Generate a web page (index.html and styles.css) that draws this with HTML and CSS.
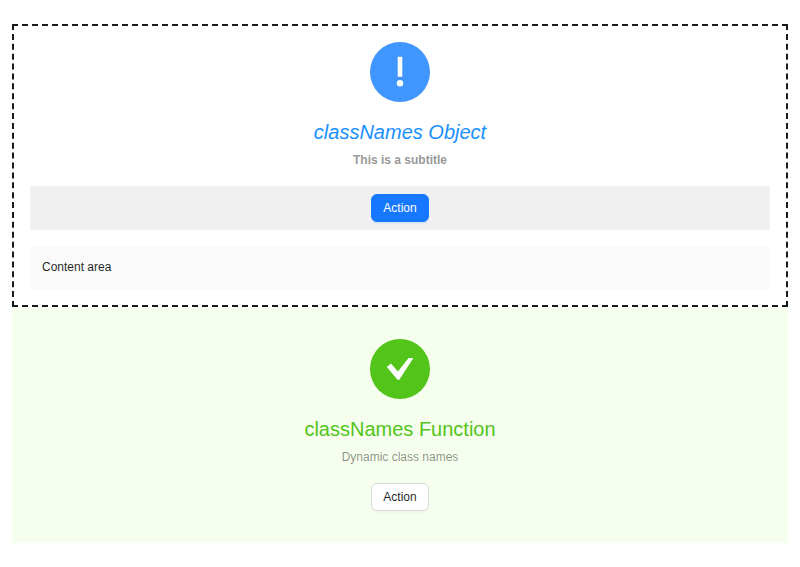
FILE: index.html
```html
<!DOCTYPE html>
<html lang="en">
<head>
<meta charset="utf-8">
<title>Result</title>
<link rel="stylesheet" href="styles.css">
</head>
<body>
<main class="page">
  <section class="result result-object">
    <div class="icon icon-info">
      <svg width="60" height="60" viewBox="0 0 60 60"><rect x="27.7" y="14.7" width="4.6" height="20" rx="0.6" fill="#fff"/><circle cx="30" cy="41.3" r="3.2" fill="#fff"/></svg>
    </div>
    <h2 class="title title-object">classNames Object</h2>
    <p class="subtitle subtitle-object">This is a subtitle</p>
    <div class="extra extra-object"><button class="btn btn-primary">Action</button></div>
    <div class="content">Content area</div>
  </section>
  <section class="result result-function">
    <div class="icon icon-success">
      <svg width="60" height="60" viewBox="0 0 60 60"><path d="M16.8 27.9 L20.9 24.6 L28 32.6 L38.6 19 L43.4 19 L29.6 40.2 Q28.4 41.6 27.1 40.2 Z" fill="#fff"/></svg>
    </div>
    <h2 class="title title-function">classNames Function</h2>
    <p class="subtitle subtitle-function">Dynamic class names</p>
    <div class="extra extra-function"><button class="btn btn-default">Action</button></div>
  </section>
</main>
</body>
</html>
```
FILE: styles.css
```css
* { box-sizing: border-box; }
html, body { margin: 0; padding: 0; background: #fff; }
body { font-family: "Liberation Sans", Arial, sans-serif; font-size: 12px; color: rgba(0,0,0,.88); }
.page { padding: 24px 12px; }
.result { text-align: center; }
.result-object { border: 2px dashed #1a1a1a; padding: 16px; height: 283px; }
.result-function { background: #f6ffed; padding: 32px; height: 236px; }
.icon { width: 60px; height: 60px; border-radius: 50%; margin: 0 auto; }
.icon svg { display: block; }
.icon-info { background: #4096ff; }
.icon-success { background: #52c41a; }
.title { margin: 16px 0 0; font-size: 20px; font-weight: 400; line-height: 28px; }
.title-object { color: #1890ff; font-style: italic; }
.title-function { color: #52c41a; }
.subtitle { margin: 4px 0 0; font-size: 12px; line-height: 20px; }
.subtitle-object { font-weight: 700; color: #999; }
.subtitle-function { color: rgba(0,0,0,.45); }
.extra-object { margin-top: 16px; background: #f0f0f0; border-radius: 2px; padding: 8px; height: 44px; }
.extra-function { margin-top: 16px; }
.btn { display: block; margin: 0 auto; width: 58px; height: 28px; padding: 0; border-radius: 6px; font: inherit; font-size: 12px; cursor: pointer; }
.btn-primary { background: #1677ff; color: #fff; border: 1px solid #1677ff; box-shadow: 0 2px 0 rgba(5,145,255,.1); }
.btn-default { background: #fff; color: rgba(0,0,0,.88); border: 1px solid #d9d9d9; box-shadow: 0 2px 0 rgba(0,0,0,.02); }
.content { margin-top: 17px; background: #fafafa; border-radius: 2px; padding: 12px; height: 42px; line-height: 16px; text-align: left; }
```
